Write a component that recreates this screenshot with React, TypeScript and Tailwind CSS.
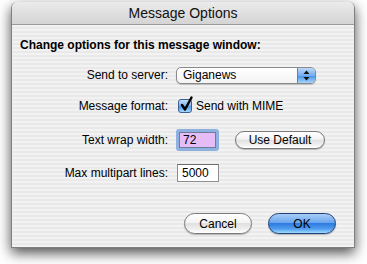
import type { ReactNode } from "react";

const stripes =
  "bg-[repeating-linear-gradient(to_bottom,#f2f2f2_0px,#f2f2f2_2px,#e9e9e9_2px,#e9e9e9_4px)]";

function Row({ label, h, className, children }: { label: string; h: string; className?: string; children: ReactNode }) {
  return (
    <div className={`flex items-center ${h} ${className ?? ""}`}>
      <div className="w-[157px] shrink-0 pr-[1px] text-right text-[12px] leading-none text-black">{label}</div>
      <div className="ml-[7px] flex items-center">{children}</div>
    </div>
  );
}

function PillButton({ children, primary = false, className }: { children: ReactNode; primary?: boolean; className?: string }) {
  return (
    <button
      type="button"
      className={`flex items-center justify-center rounded-full border text-[12px] leading-none text-black ${
        primary
          ? "border-[#1f3f7a] bg-[linear-gradient(to_bottom,#a9cdf6_0%,#6ba6ee_45%,#2f7be0_50%,#4f9cef_78%,#9fdcff_100%)]"
          : "border-[#7a7a7a] bg-[linear-gradient(to_bottom,#ffffff_0%,#f4f4f4_45%,#e0e0e0_50%,#f0f0f0_80%,#ffffff_100%)]"
      } shadow-[0_1px_1px_rgba(0,0,0,0.25)] ${className ?? ""}`}
    >
      {children}
    </button>
  );
}

export default function App() {
  return (
    <div className="h-[264px] w-[367px] overflow-hidden bg-white pl-[11px] pt-[2px] font-['Liberation_Sans',Arial,sans-serif]">
      <div className="flex h-[246px] w-[344px] flex-col overflow-hidden rounded-t-[6px] border-x border-b border-[#808080] shadow-[0_5px_13px_rgba(0,0,0,0.7)]">
        <div className="flex h-[23px] shrink-0 items-center justify-center border-b border-[#9a9a9a] bg-[linear-gradient(to_bottom,#ebebeb,#d4d4d4)] text-[14px] text-[#111]">
          Message Options
        </div>
        <div className={`flex flex-1 flex-col ${stripes}`}>
          <div className="ml-[8px] mt-[12px] h-[16px] text-[12px] font-bold leading-[16px] text-black">
            Change options for this message window:
          </div>

          <Row label="Send to server:" h="h-[18px]" className="mt-[13px]">
            <div className="flex h-[17px] w-[140px] overflow-hidden rounded-[5px] border border-[#8a8a8a] bg-[linear-gradient(to_bottom,#ffffff,#f3f3f3)] shadow-[0_1px_1px_rgba(0,0,0,0.2)]">
              <div className="flex flex-1 items-center pl-[6px] text-[12px] leading-none text-black">Giganews</div>
              <div className="flex w-[18px] items-center justify-center border-l border-[#5a82b8] bg-[linear-gradient(to_bottom,#bcd8f8,#76aef0_50%,#4d95ea_55%,#a6d4fb)]">
                <svg width="7" height="11" viewBox="0 0 7 11">
                  <path d="M3.5 0.5 L6.5 4 L0.5 4 Z" fill="#111" />
                  <path d="M0.5 7 L6.5 7 L3.5 10.5 Z" fill="#111" />
                </svg>
              </div>
            </div>
          </Row>

          <Row label="Message format:" h="h-[16px]" className="mt-[14px]">
            <div className="relative ml-[2px] h-[14px] w-[14px] rounded-[3px] border border-[#3a5f95] bg-[linear-gradient(to_bottom,#c4defa,#7cb1ee_50%,#4f97ea_55%,#a9d8fd)]">
              <svg className="absolute -top-[4px] left-[1px]" width="13" height="16" viewBox="0 0 13 16">
                <path d="M2 9 L5 13.5 L11.5 1.5" fill="none" stroke="#000" strokeWidth="2.4" strokeLinecap="round" strokeLinejoin="round" />
              </svg>
            </div>
            <span className="ml-[4px] text-[12px] leading-none text-black">Send with MIME</span>
          </Row>

          <Row label="Text wrap width:" h="h-[22px]" className="mt-[15px]">
            <div className="flex items-center">
              <div className="rounded-[3px] bg-[#8fb1df] p-[3px]">
                <div className="flex h-[16px] w-[37px] items-center border border-[#6d7d96] bg-[#e6bcf6] pl-[3px] text-[12px] leading-none text-black">
                  72
                </div>
              </div>
              <PillButton className="ml-[16px] h-[18px] w-[90px]">Use Default</PillButton>
            </div>
          </Row>

          <Row label="Max multipart lines:" h="h-[18px]" className="mt-[13px]">
            <div className="ml-[1px] flex h-[18px] w-[42px] items-center border border-[#8e8e8e] border-t-[#6f6f6f] bg-white pl-[4px] text-[12px] leading-none text-black">
              5000
            </div>
          </Row>

          <div className="ml-[172px] mt-[31px] flex gap-[16px]">
            <PillButton className="h-[21px] w-[68px]">Cancel</PillButton>
            <PillButton primary className="h-[21px] w-[68px]">OK</PillButton>
          </div>
        </div>
      </div>
    </div>
  );
}
